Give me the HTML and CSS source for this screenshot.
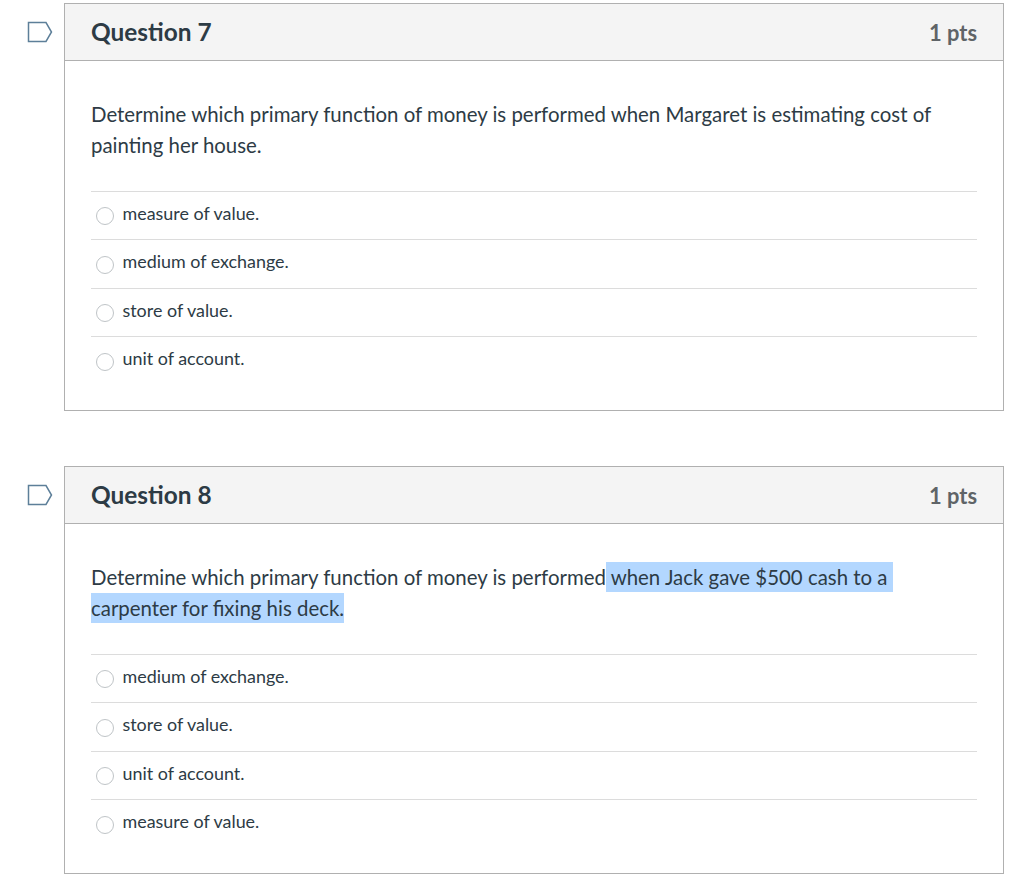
FILE: index.html
```html
<!DOCTYPE html>
<html lang="en">
<head>
    <meta charset="UTF-8">
    <meta name="viewport" content="width=device-width, initial-scale=1.0">
    <title>Quiz</title>
    <link rel="stylesheet" href="styles.css">
</head>
<body>
    <div class="quiz">
        <div class="question">
            <svg class="flag" width="26" height="22" viewBox="0 0 26 22"><path d="M1.5 1.5H19L24.5 11L19 20.500H1.500Z" fill="none" stroke="#5d7f99" stroke-width="1.500"/></svg>
            <div class="question-header">
                <h2>Question 7</h2>
                <span class="pts">1 pts</span>
            </div>
            <div class="question-body">
                <p class="question-text">Determine which primary function of money is performed when Margaret is estimating cost of painting her house.</p>
                <div class="answers">
                    <label class="answer"><span class="radio"></span>measure of value.</label>
                    <label class="answer"><span class="radio"></span>medium of exchange.</label>
                    <label class="answer"><span class="radio"></span>store of value.</label>
                    <label class="answer"><span class="radio"></span>unit of account.</label>
                </div>
            </div>
        </div>

        <div class="question">
            <svg class="flag" width="26" height="22" viewBox="0 0 26 22"><path d="M1.5 1.5H19L24.5 11L19 20.500H1.500Z" fill="none" stroke="#5d7f99" stroke-width="1.500"/></svg>
            <div class="question-header">
                <h2>Question 8</h2>
                <span class="pts">1 pts</span>
            </div>
            <div class="question-body">
                <p class="question-text">Determine which primary function of money is performed<span class="selected first"> when Jack gave $500 cash to a</span><br><span class="selected">carpenter for fixing his deck.</span></p>
                <div class="answers">
                    <label class="answer"><span class="radio"></span>medium of exchange.</label>
                    <label class="answer"><span class="radio"></span>store of value.</label>
                    <label class="answer"><span class="radio"></span>unit of account.</label>
                    <label class="answer"><span class="radio"></span>measure of value.</label>
                </div>
            </div>
        </div>
    </div>
</body>
</html>
```

FILE: styles.css
```css
body {
    margin: 0;
    background-color: #fff;
    font-family: Lato, "Liberation Sans", sans-serif;
    color: #2d3b45;
}
.quiz {
    width: 940px;
    margin-left: 64px;
    padding-top: 3px;
}
.question {
    position: relative;
    border: 1px solid #b0b0b0;
    margin-bottom: 55.500px;
}
.flag {
    position: absolute;
    left: -38px;
    top: 17px;
}
.question-header {
    display: flex;
    justify-content: space-between;
    align-items: center;
    height: 56px;
    padding: 0 26px;
    background-color: #f4f4f4;
    border-bottom: 1px solid #b0b0b0;
}
.question-header h2 {
    margin: 0 0 2px;
    font-size: 24.400px;
    font-weight: 700;
}
.pts {
    font-size: 21.900px;
    font-weight: 700;
    color: #5f6467;
}
.question-body {
    padding: 37.500px 26px 25px;
}
.question-text {
    margin: 0 0 30px;
    font-size: 20.420px;
    line-height: 31px;
}
.selected {
    background-color: #b3d7ff;
    padding: 3px 0;
}
.selected.first {
    padding-right: 6px;
}
.answer {
    display: flex;
    align-items: center;
    height: 42.500px;
    padding-bottom: 5px;
    border-top: 1px solid #dcdcdc;
    font-size: 17.900px;
}
.radio {
    width: 18px;
    height: 18px;
    box-sizing: border-box;
    margin: 7px 8.500px 0 5px;
    border: 1px solid #bfc4c7;
    border-radius: 50%;
    background-color: #fff;
}
```
